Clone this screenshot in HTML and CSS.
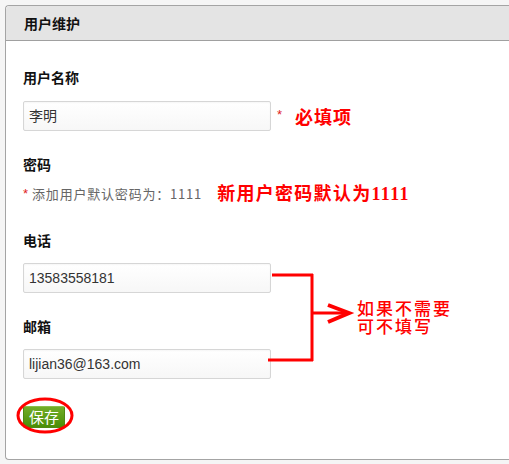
FILE: index.html
```html
<!DOCTYPE html>
<html lang="zh-CN">
<head>
<meta charset="utf-8">
<title>用户维护</title>
<link rel="stylesheet" href="styles.css">
</head>
<body>
<div class="panel">
  <div class="panel-head">用户维护</div>
  <div class="panel-body">
    <div class="label first">用户名称</div>
    <div class="row">
      <div class="input">李明</div>
      <span class="star">*</span>
      <span class="note note-req">必填项</span>
    </div>

    <div class="label gap-lg">密码</div>
    <div class="hint">
      <span class="star">*</span>
      <span class="hint-text">添加用户默认密码为：1111</span>
      <span class="note note-pw">新用户密码默认为1111</span>
    </div>

    <div class="label gap-xl">电话</div>
    <div class="row tight">
      <div class="input">13583558181</div>
    </div>

    <div class="label gap-lg">邮箱</div>
    <div class="row tight">
      <div class="input">lijian36@163.com</div>
    </div>

    <div class="actions">
      <button class="btn-save" type="button">保存</button>
    </div>

    <svg class="bracket" width="100" height="100" viewBox="0 0 100 100" aria-hidden="true">
      <path d="M12 7 H53 M52 6 V93 M8 92 H53 M52 45 H88" fill="none" stroke="#ff0000" stroke-width="3"/>
      <path d="M68 37 L89 45 L68 54" fill="none" stroke="#ff0000" stroke-width="4" stroke-linejoin="miter"/>
    </svg>
    <div class="callout">
      <div class="callout-line">如果不需要</div>
      <div class="callout-line">可不填写</div>
    </div>
    <svg class="ring" width="62" height="42" viewBox="0 0 62 42" aria-hidden="true">
      <ellipse cx="31" cy="20.5" rx="27" ry="16.5" fill="none" stroke="#ff0000" stroke-width="3"/>
    </svg>
  </div>
</div>
</body>
</html>
```

FILE: styles.css
```css
html, body {
  margin: 0;
  padding: 0;
}
body {
  background: #f5f5f5;
  font-family: "Noto Sans CJK SC", "Liberation Sans", sans-serif;
  color: #222;
  overflow: hidden;
}
.panel {
  margin: 5px 0 0 5px;
  width: calc(100% - 5px);
  height: 453px;
  background: #ffffff;
  border: 1px solid #a4a4a4;
  border-right: none;
  border-radius: 4px 0 0 4px;
  position: relative;
}
.panel-head {
  height: 34px;
  background: #e4e4e4;
  border-bottom: 1px solid #a0a0a0;
  border-radius: 4px 0 0 0;
  font-size: 14px;
  font-weight: bold;
  line-height: 34px;
  padding-left: 18px;
  color: #111;
}
.panel-body {
  padding-left: 17px;
}
.label {
  font-size: 14px;
  font-weight: bold;
  line-height: 20px;
  height: 20px;
  color: #111;
}
.label.first { padding-top: 26px; }
.label.gap-lg { margin-top: 23px; }
.label.gap-xl { margin-top: 26px; }
.row {
  display: flex;
  align-items: center;
  margin-top: 14px;
}
.row.tight { margin-top: 13px; }
.input {
  box-sizing: border-box;
  width: 248px;
  height: 30px;
  border: 1px solid #d6d6d6;
  border-radius: 2px;
  background: linear-gradient(#ffffff, #f7f7f7);
  box-shadow: inset 0 1px 2px rgba(0,0,0,0.04);
  padding-left: 5px;
  font-family: "Liberation Sans", "Noto Sans CJK SC", sans-serif;
  font-size: 14px;
  line-height: 28px;
  color: #333;
}
.star {
  color: #e02020;
  font-family: "Liberation Sans", sans-serif;
  font-size: 13px;
}
.row .star {
  margin-left: 6px;
  position: relative;
  top: -2px;
}
.note {
  color: #ff0000;
  font-weight: bold;
  font-size: 18px;
  font-family: "Liberation Serif", "Noto Sans CJK SC", serif;
  letter-spacing: 1px;
}
.note-req { margin-left: 13px; }
.hint {
  display: flex;
  align-items: center;
  margin-top: 10px;
  height: 20px;
  line-height: 20px;
}
.hint-text {
  margin-left: 4px;
  font-size: 13px;
  letter-spacing: 0.8px;
  color: #666;
}
.note-pw {
  margin-left: 15px;
  letter-spacing: 1.3px;
}
.actions {
  margin-top: 25px;
}
.btn-save {
  width: 42px;
  height: 22px;
  padding: 0;
  border: 1px solid #4f8a12;
  border-top-color: #8bbf4a;
  border-radius: 2px;
  background: linear-gradient(#72ad28, #4a8e06);
  color: #ffffff;
  font-family: "Noto Sans CJK SC", sans-serif;
  font-size: 15px;
  line-height: 20px;
}
.bracket {
  position: absolute;
  left: 254px;
  top: 262px;
}
.callout {
  position: absolute;
  left: 351px;
  top: 293px;
  color: #ff0000;
  font-size: 17px;
  font-weight: 500;
  letter-spacing: 2px;
}
.callout-line {
  height: 18px;
  line-height: 18px;
  white-space: nowrap;
}
.ring {
  position: absolute;
  left: 8px;
  top: 389px;
}
```
